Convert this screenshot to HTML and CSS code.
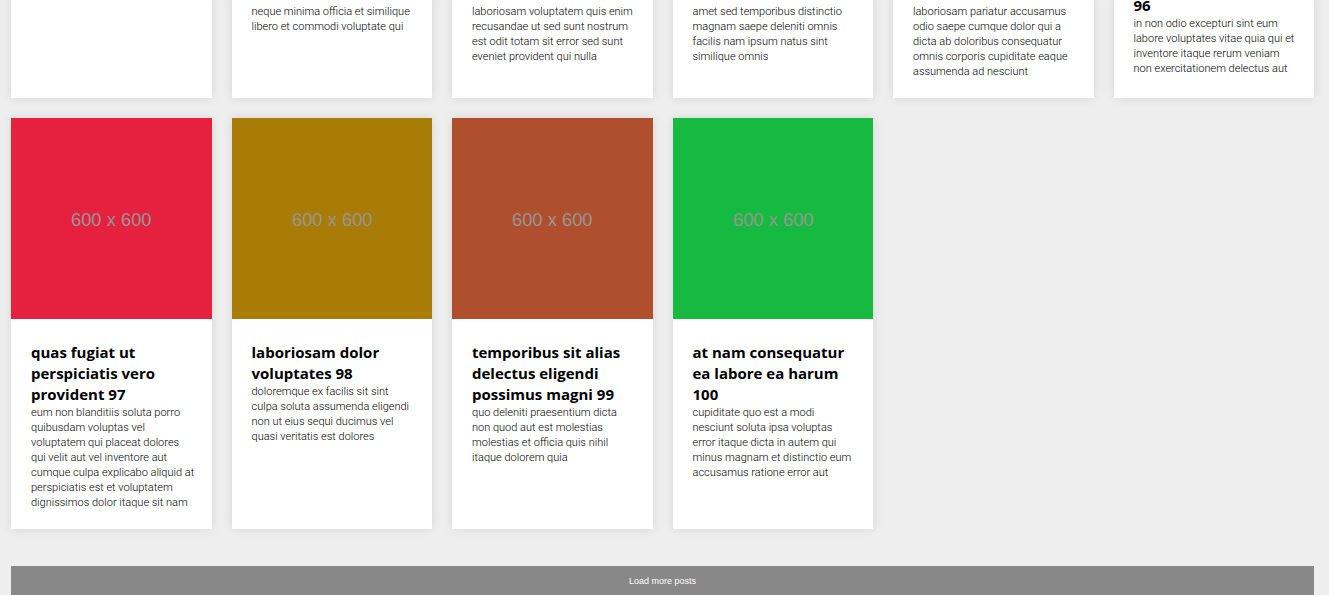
FILE: index.html
```html
<!DOCTYPE html>
<html lang="en">
<head>
<meta charset="utf-8">
<title>Posts</title>
<link rel="stylesheet" href="styles.css">
</head>
<body>
<main class="page">
  <section class="posts posts-previous">
    <article class="post"></article>
    <article class="post"><p class="post-text">neque minima officia et similique<br>libero et commodi voluptate qui</p></article>
    <article class="post"><p class="post-text">laboriosam voluptatem quis enim<br>recusandae ut sed sunt nostrum<br>est odit totam sit error sed sunt<br>eveniet provident qui nulla</p></article>
    <article class="post"><p class="post-text">amet sed temporibus distinctio<br>magnam saepe deleniti omnis<br>facilis nam ipsum natus sint<br>similique omnis</p></article>
    <article class="post"><p class="post-text">laboriosam pariatur accusamus<br>odio saepe cumque dolor qui a<br>dicta ab doloribus consequatur<br>omnis corporis cupiditate eaque<br>assumenda ad nesciunt</p></article>
    <article class="post post-titled"><h2 class="post-title">96</h2><p class="post-text">in non odio excepturi sint eum<br>labore voluptates vitae quia qui et<br>inventore itaque rerum veniam<br>non exercitationem delectus aut</p></article>
  </section>

  <section class="posts">
    <article class="post">
      <svg class="post-image red" viewBox="0 0 600 600" role="img"><text class="image-label" x="300" y="324">600 x 600</text></svg>
      <div class="post-body">
        <h2 class="post-title">quas fugiat ut<br>perspiciatis vero<br>provident 97</h2>
        <p class="post-text">eum non blanditiis soluta porro<br>quibusdam voluptas vel<br>voluptatem qui placeat dolores<br>qui velit aut vel inventore aut<br>cumque culpa explicabo aliquid at<br>perspiciatis est et voluptatem<br>dignissimos dolor itaque sit nam</p>
      </div>
    </article>
    <article class="post">
      <svg class="post-image gold" viewBox="0 0 600 600" role="img"><text class="image-label" x="300" y="324">600 x 600</text></svg>
      <div class="post-body">
        <h2 class="post-title">laboriosam dolor<br>voluptates 98</h2>
        <p class="post-text">doloremque ex facilis sit sint<br>culpa soluta assumenda eligendi<br>non ut eius sequi ducimus vel<br>quasi veritatis est dolores</p>
      </div>
    </article>
    <article class="post">
      <svg class="post-image rust" viewBox="0 0 600 600" role="img"><text class="image-label" x="300" y="324">600 x 600</text></svg>
      <div class="post-body">
        <h2 class="post-title">temporibus sit alias<br>delectus eligendi<br>possimus magni 99</h2>
        <p class="post-text">quo deleniti praesentium dicta<br>non quod aut est molestias<br>molestias et officia quis nihil<br>itaque dolorem quia</p>
      </div>
    </article>
    <article class="post">
      <svg class="post-image green" viewBox="0 0 600 600" role="img"><text class="image-label" x="300" y="324">600 x 600</text></svg>
      <div class="post-body">
        <h2 class="post-title">at nam consequatur<br>ea labore ea harum<br>100</h2>
        <p class="post-text">cupiditate quo est a modi<br>nesciunt soluta ipsa voluptas<br>error itaque dicta in autem qui<br>minus magnam et distinctio eum<br>accusamus ratione error aut</p>
      </div>
    </article>
  </section>

  <button class="load-more" type="button">Load more posts</button>
</main>
</body>
</html>
```
FILE: styles.css
```css
* {
  box-sizing: border-box;
  margin: 0;
  padding: 0;
}

body {
  background: #eee;
  color: #000;
  font-family: "Segoe UI", "Open Sans", "Noto Sans", sans-serif;
}

.page {
  display: flow-root;
  padding: 0 15px 0 11px;
}

.posts {
  display: grid;
  grid-template-columns: repeat(6, minmax(0, 1fr));
  gap: 20px;
}

/* The earlier row runs off the top edge of the window. */
.posts-previous {
  margin: -5px 0 20px;
}

.post {
  background: #fff;
  box-shadow: 0 0 10px rgba(0, 0, 0, 0.1);
}

.posts-previous .post {
  padding: 9px 20px 19px;
}

.posts-previous .post-titled {
  padding-top: 0;
}

.post-image {
  display: block;
  width: 100%;
}

.red { background: #e5213f; }
.gold { background: #a87c07; }
.rust { background: #b04f2e; }
.green { background: #17ba41; }

.image-label {
  fill: #969696;
  font-family: "Liberation Sans", Arial, sans-serif;
  font-size: 55px;
  text-anchor: middle;
}

.post-body {
  padding: 23px 20px 19px;
}

.post-title {
  font-size: 15px;
  font-weight: 700;
  line-height: 21px;
  white-space: nowrap;
}

.post-text {
  font-family: Roboto, "Open Sans", sans-serif;
  font-size: 11px;
  font-weight: 300;
  line-height: 15px;
  white-space: nowrap;
}

.load-more {
  display: block;
  width: 100%;
  margin-top: 37px;
  padding: 10px 10px 8px;
  border: 0;
  background: #888;
  color: #fff;
  font-family: "Liberation Sans", Arial, sans-serif;
  font-size: 9px;
  line-height: 11px;
  cursor: pointer;
}
```
